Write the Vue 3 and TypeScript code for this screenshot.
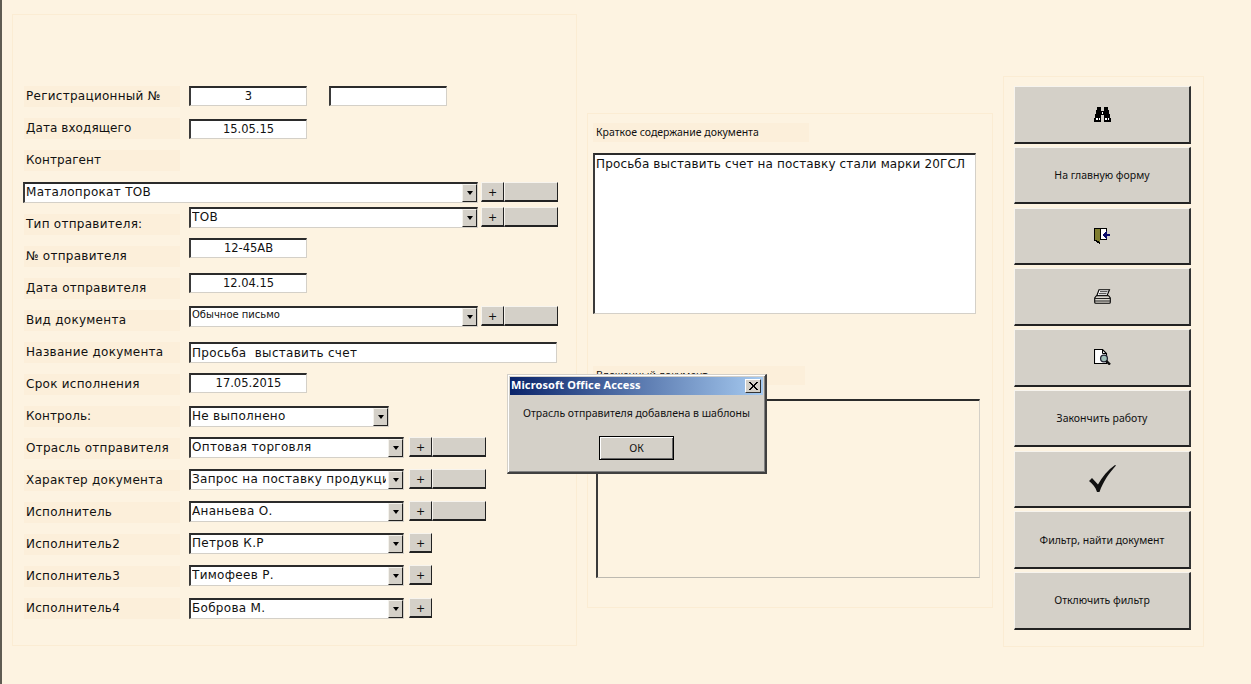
<script setup lang="ts">
interface Ctl { kind: 'input' | 'combo' | 'plain'; size: string; text?: string; tone?: string; plus?: boolean; blank?: boolean }
interface Row { label?: string; lift: string; labelTone?: string; ctls: Ctl[] }

const rows: Row[] = [
  { label: 'Регистрационный №', lift: 'l0', ctls: [{ kind: 'input', size: 'num', text: '3' }, { kind: 'input', size: 'num second', text: '' }] },
  { label: 'Дата входящего', labelTone: 'tight', lift: 'd1', ctls: [{ kind: 'input', size: 'num', text: '15.05.15' }] },
  { label: 'Контрагент', labelTone: 'tight', lift: 'l0', ctls: [] },
  { lift: 'flush', ctls: [{ kind: 'combo', size: 'wide', text: 'Маталопрокат ТОВ', plus: true, blank: true }] },
  { label: 'Тип отправителя:', lift: 'l7', ctls: [{ kind: 'combo', size: 'long', text: 'ТОВ', plus: true, blank: true }] },
  { label: '№ отправителя', lift: 'l8', ctls: [{ kind: 'input', size: 'num', text: '12-45АВ' }] },
  { label: 'Дата отправителя', lift: 'l5', ctls: [{ kind: 'input', size: 'num', text: '12.04.15' }] },
  { label: 'Вид документа', lift: 'l4', ctls: [{ kind: 'combo', size: 'long', text: 'Обычное письмо', tone: 'tiny', plus: true, blank: true }] },
  { label: 'Название документа', lift: 'l0', ctls: [{ kind: 'plain', size: 'name', text: 'Просьба  выставить счет' }] },
  { label: 'Срок исполнения', lift: 'l1', ctls: [{ kind: 'input', size: 'num', text: '17.05.2015' }] },
  { label: 'Контроль:', labelTone: 'tight', lift: 'l0', ctls: [{ kind: 'combo', size: 'short', text: 'Не выполнено' }] },
  { label: 'Отрасль отправителя', lift: 'l1', ctls: [{ kind: 'combo', size: 'mid', text: 'Оптовая торговля', plus: true, blank: true }] },
  { label: 'Характер документа', lift: 'l1', ctls: [{ kind: 'combo', size: 'mid', text: 'Запрос на поставку продукции', plus: true, blank: true }] },
  { label: 'Исполнитель', lift: 'l1', ctls: [{ kind: 'combo', size: 'mid', text: 'Ананьева О.', plus: true, blank: true }] },
  { label: 'Исполнитель2', lift: 'l1', ctls: [{ kind: 'combo', size: 'mid', text: 'Петров К.Р', plus: true }] },
  { label: 'Исполнитель3', lift: 'l1', ctls: [{ kind: 'combo', size: 'mid', text: 'Тимофеев Р.', plus: true }] },
  { label: 'Исполнитель4', lift: 'l0', ctls: [{ kind: 'combo', size: 'mid', text: 'Боброва М.', plus: true }] }
]

const buttons = [
  { icon: 'find' }, { text: 'На главную форму' }, { icon: 'door' }, { icon: 'print' },
  { icon: 'preview' }, { text: 'Закончить работу' }, { icon: 'check' },
  { text: 'Фильтр, найти документ' }, { text: 'Отключить фильтр' }
]
</script>

<template>
  <div class="screen">
    <section class="panel left">
      <div v-for="(r, i) in rows" :key="i" class="row">
        <span v-if="r.label" class="label" :class="r.labelTone">{{ r.label }}</span>
        <div class="ctls" :class="r.lift">
          <template v-for="(c, j) in r.ctls" :key="j">
            <div v-if="c.kind === 'input'" class="field center" :class="c.size">{{ c.text }}</div>
            <div v-else-if="c.kind === 'plain'" class="field" :class="c.size">{{ c.text }}</div>
            <div v-else class="field combo" :class="c.size">
              <span class="combo-text" :class="c.tone">{{ c.text }}</span>
              <span class="arrow"><i></i></span>
            </div>
            <button v-if="c.plus" class="plus">+</button>
            <button v-if="c.blank" class="blank"></button>
          </template>
        </div>
      </div>
    </section>

    <section class="panel middle">
      <div class="mid-label first">Краткое содержание документа</div>
      <div class="memo">Просьба выставить счет на поставку стали марки 20ГСЛ</div>
      <div class="mid-label second-label">Вложенный документ</div>
      <div class="attach"></div>
    </section>

    <section class="panel right">
      <button v-for="(b, i) in buttons" :key="i" class="cmd">
        <template v-if="b.text">{{ b.text }}</template>
        <svg v-else-if="b.icon === 'find'" width="17" height="15" viewBox="0 0 17 15" shape-rendering="crispEdges">
          <path fill="#000" d="M3 0h4v4h3V0h4v3h1v4h1v4h1v4h-7V8H7v7H0v-4h1V7h1V3h1z"/>
          <path fill="#fff" d="M2 11h2v2H2zM5 11h1v2H5zM11 11h2v2h-2zM14 11h1v2h-1zM8 5h1v2H8z"/>
        </svg>
        <svg v-else-if="b.icon === 'door'" width="16" height="17" viewBox="0 0 16 17" shape-rendering="crispEdges">
          <path fill="#fff" d="M6 1h6v11H6z"/>
          <path fill="#000" d="M0 1h13v1H7v10h6v1H6v4H5v-1H3v-1H2v-1H0z"/>
          <path fill="#7f7d30" d="M1 2h5v13H5v-1H3v-1H1z"/>
          <path fill="#000" d="M12 2h1v2h-1zM12 10h1v2h-1z"/>
          <path fill="#0b0b6b" d="M9 7h1V6h1V5h1V4h1v3h3v2h-3v3h-1v-1h-1v-1h-1V9H9z"/>
        </svg>
        <svg v-else-if="b.icon === 'print'" width="17" height="15" viewBox="0 0 17 15">
          <path fill="#fff" stroke="#000" stroke-width="1.100" d="M5 .7h10.500l-2.500 6H2.800z"/>
          <path stroke="#333" stroke-width="1" d="M6 2.700h7.500M5 4.700h7.500"/>
          <path fill="#d8d5cd" stroke="#000" stroke-width="1.100" d="M2.400 6.700h12.200l1.700 2.300v4.300a1 1 0 0 1-1 1H1.700a1 1 0 0 1-1-1V9z"/>
          <path stroke="#222" stroke-width="1" d="M.8 9.500h15.400M.8 12h15.400"/>
        </svg>
        <svg v-else-if="b.icon === 'preview'" width="17" height="16" viewBox="0 0 17 16">
          <path fill="#fff" stroke="#000" stroke-width="1.100" d="M.5.5h8l4 4v10H.5z"/>
          <path fill="none" stroke="#000" stroke-width="1" d="M8.500.5v4h4"/>
          <circle cx="10" cy="9.500" r="3.400" fill="#9fbfb8" stroke="#223" stroke-width="1.300"/>
          <path stroke="#111" stroke-width="2.400" d="M12.200 11.800l3.800 3.800"/>
        </svg>
        <svg v-else width="27" height="28" viewBox="0 0 27 28">
          <path fill="#111" d="M0 16l3-3 6 6.500C13 12 19 5 26 0l1 .5C20 8 14 17 10.500 27H8C6.500 22 3.500 19 0 16z"/>
        </svg>
      </button>
    </section>

    <div class="dialog" role="dialog">
      <header class="titlebar">
        <span class="title-text">Microsoft Office Access</span>
        <button class="close">
          <svg width="9" height="8" viewBox="0 0 9 8" shape-rendering="crispEdges"><path fill="#000" d="M0 0h2v1h1v1h1v1h1V2h1V1h1V0h2v1H8v1H7v1H6v2h1v1h1v1h1v1H7V7H6V6H5V5H4v1H3v1H2v1H0V7h1V6h1V5h1V3H2V2H1V1H0z"/></svg>
        </button>
      </header>
      <p class="message">Отрасль отправителя добавлена в шаблоны</p>
      <button class="ok"><span>ОК</span></button>
    </div>
  </div>
</template>

<style>
html, body { margin: 0; background: #fdf3e1; }
</style>

<style scoped>
.screen {
  position: relative;
  box-sizing: border-box;
  display: flex;
  align-items: flex-start;
  width: 1251px;
  height: 684px;
  overflow: hidden;
  background: #fdf3e1;
  border-left: 2px solid #5f5b52;
  font-family: "DejaVu Sans", sans-serif;
  font-size: 12px;
  color: #111;
}
.panel { box-sizing: border-box; border: 1px solid #fbecd3; }
.left { width: 565px; height: 632px; margin: 14px 0 0 10px; padding: 71px 0 0 11px; }
.middle { width: 406px; height: 495px; margin: 113px 0 0 10px; padding: 9px 0 0 5px; }
.right { width: 201px; height: 571px; margin: 76px 0 0 10px; padding: 9px 0 0 10px; }

.row { display: flex; height: 32px; align-items: flex-start; }
.label {
  box-sizing: border-box;
  flex: none;
  width: 156px;
  height: 21px;
  padding: 2px 0 0 2px;
  line-height: 17px;
  white-space: pre;
  background: #fcefda;
  letter-spacing: .27px;
}
.label.tight { letter-spacing: .08px; }
.ctls { display: flex; margin-left: 9px; align-items: flex-start; }
.d1 { margin-top: 1px; }
.l1 { margin-top: -1px; }
.l4 { margin-top: -4px; }
.l5 { margin-top: -5px; }
.l7 { margin-top: -7px; }
.l8 { margin-top: -8px; }
.flush { margin-left: -1px; }

.field {
  box-sizing: border-box;
  position: relative;
  flex: none;
  height: 21px;
  padding: 0 0 0 1px;
  line-height: 16px;
  letter-spacing: .3px;
  white-space: pre;
  overflow: hidden;
  background: #fff;
  border-top: 2px solid #2b2b2b;
  border-left: 2px solid #3a3a3a;
  border-right: 1px solid #d4d0c8;
  border-bottom: 1px solid #d4d0c8;
}
.center { text-align: center; font-size: 11.500px; padding: 0; letter-spacing: 0; }
.num { width: 118px; height: 20px; }
.num.second { margin-left: 22px; }
.name { width: 368px; padding-top: 1px; }
.combo { padding-right: 17px; }
.wide { width: 455px; }
.long { width: 289px; }
.short { width: 200px; }
.mid { width: 215px; }
.combo-text { display: block; overflow: hidden; white-space: pre; }
.tiny { font-size: 10px; line-height: 13px; letter-spacing: 0; }

.arrow {
  box-sizing: border-box;
  position: absolute;
  top: 0;
  right: 0;
  display: flex;
  align-items: center;
  justify-content: center;
  width: 15px;
  height: 18px;
  background: #d4d0c8;
  border-top: 1px solid #f4f2ec;
  border-left: 1px solid #f4f2ec;
  border-right: 1px solid #222;
  border-bottom: 1px solid #222;
}
.arrow i {
  width: 0;
  height: 0;
  border-left: 3.500px solid transparent;
  border-right: 3.500px solid transparent;
  border-top: 4px solid #000;
}

button { font-family: inherit; padding: 0; margin: 0; color: #111; }
.plus, .blank {
  box-sizing: border-box;
  flex: none;
  height: 20px;
  background: #d4d0c8;
  border: 0;
  border-top: 1px solid #f7f4ee;
  border-left: 1px solid #f7f4ee;
  border-right: 1px solid #222;
  border-bottom: 2px solid #222;
}
.plus { width: 23px; margin-left: 3px; font-size: 11px; line-height: 16px; padding-top: 2px; }
.mid + .plus { margin-left: 5px; }
.blank { width: 54px; }

.mid-label {
  box-sizing: border-box;
  height: 19px;
  padding-left: 3px;
  font-family: "Noto Sans", sans-serif;
  font-size: 10.500px;
  line-height: 18px;
  background: #fcefda;
}
.first { width: 216px; }
.second-label { width: 212px; margin-top: 52px; }
.memo {
  box-sizing: border-box;
  width: 383px;
  height: 161px;
  margin: 11px 0 0 0;
  padding: 1px 0 0 1px;
  line-height: 16px;
  letter-spacing: .14px;
  background: #fff;
  border-top: 2px solid #2b2b2b;
  border-left: 2px solid #3a3a3a;
  border-right: 1px solid #d4d0c8;
  border-bottom: 1px solid #d4d0c8;
}
.attach {
  box-sizing: border-box;
  width: 384px;
  height: 179px;
  margin: 14px 0 0 3px;
  border-top: 2px solid #2b2b2b;
  border-left: 2px solid #3a3a3a;
  border-right: 1px solid #d4d0c8;
  border-bottom: 1px solid #bdb9b0;
}

.cmd {
  box-sizing: border-box;
  display: flex;
  align-items: center;
  justify-content: center;
  width: 177px;
  height: 57.500px;
  margin-bottom: 3.250px;
  font-family: "Noto Sans", sans-serif;
  font-size: 10.500px;
  background: #d4d0c8;
  border: 0;
  border-top: 1px solid #f7f4ee;
  border-left: 1px solid #f7f4ee;
  border-right: 2px solid #333;
  border-bottom: 2px solid #222;
}

.dialog {
  box-sizing: border-box;
  position: absolute;
  left: 505px;
  top: 374px;
  width: 260px;
  height: 100px;
  padding: 2px;
  font-family: "Noto Sans", sans-serif;
  background: #d4d0c8;
  border-top: 1px solid #d4d0c8;
  border-left: 1px solid #d4d0c8;
  border-right: 2px solid #404040;
  border-bottom: 2px solid #404040;
  box-shadow: inset 1px 1px 0 #fff, inset -1px -1px 0 #808080;
}
.titlebar {
  display: flex;
  align-items: center;
  justify-content: space-between;
  height: 18px;
  padding: 0 2px 0 1px;
  font-size: 11px;
  font-weight: 700;
  letter-spacing: .1px;
  color: #fff;
  background: linear-gradient(90deg, #0a246a, #a6caf0);
}
.title-text { margin-top: -3px; }
.close {
  display: flex;
  align-items: center;
  justify-content: center;
  box-sizing: border-box;
  width: 16px;
  height: 14px;
  background: #d4d0c8;
  border: 0;
  border-top: 1px solid #fff;
  border-left: 1px solid #fff;
  border-right: 1px solid #333;
  border-bottom: 1px solid #333;
}
.message {
  margin: 11px 0 0;
  text-align: center;
  font-size: 10.500px;
  line-height: 15px;
  white-space: nowrap;
}
.ok {
  display: block;
  box-sizing: border-box;
  width: 75px;
  height: 24px;
  margin: 15px 0 0 89px;
  font-family: inherit;
  font-size: 10.500px;
  background: #d4d0c8;
  border: 1px solid #000;
  box-shadow: inset 1px 1px 0 #fff, inset -1px -1px 0 #666;
}
</style>
